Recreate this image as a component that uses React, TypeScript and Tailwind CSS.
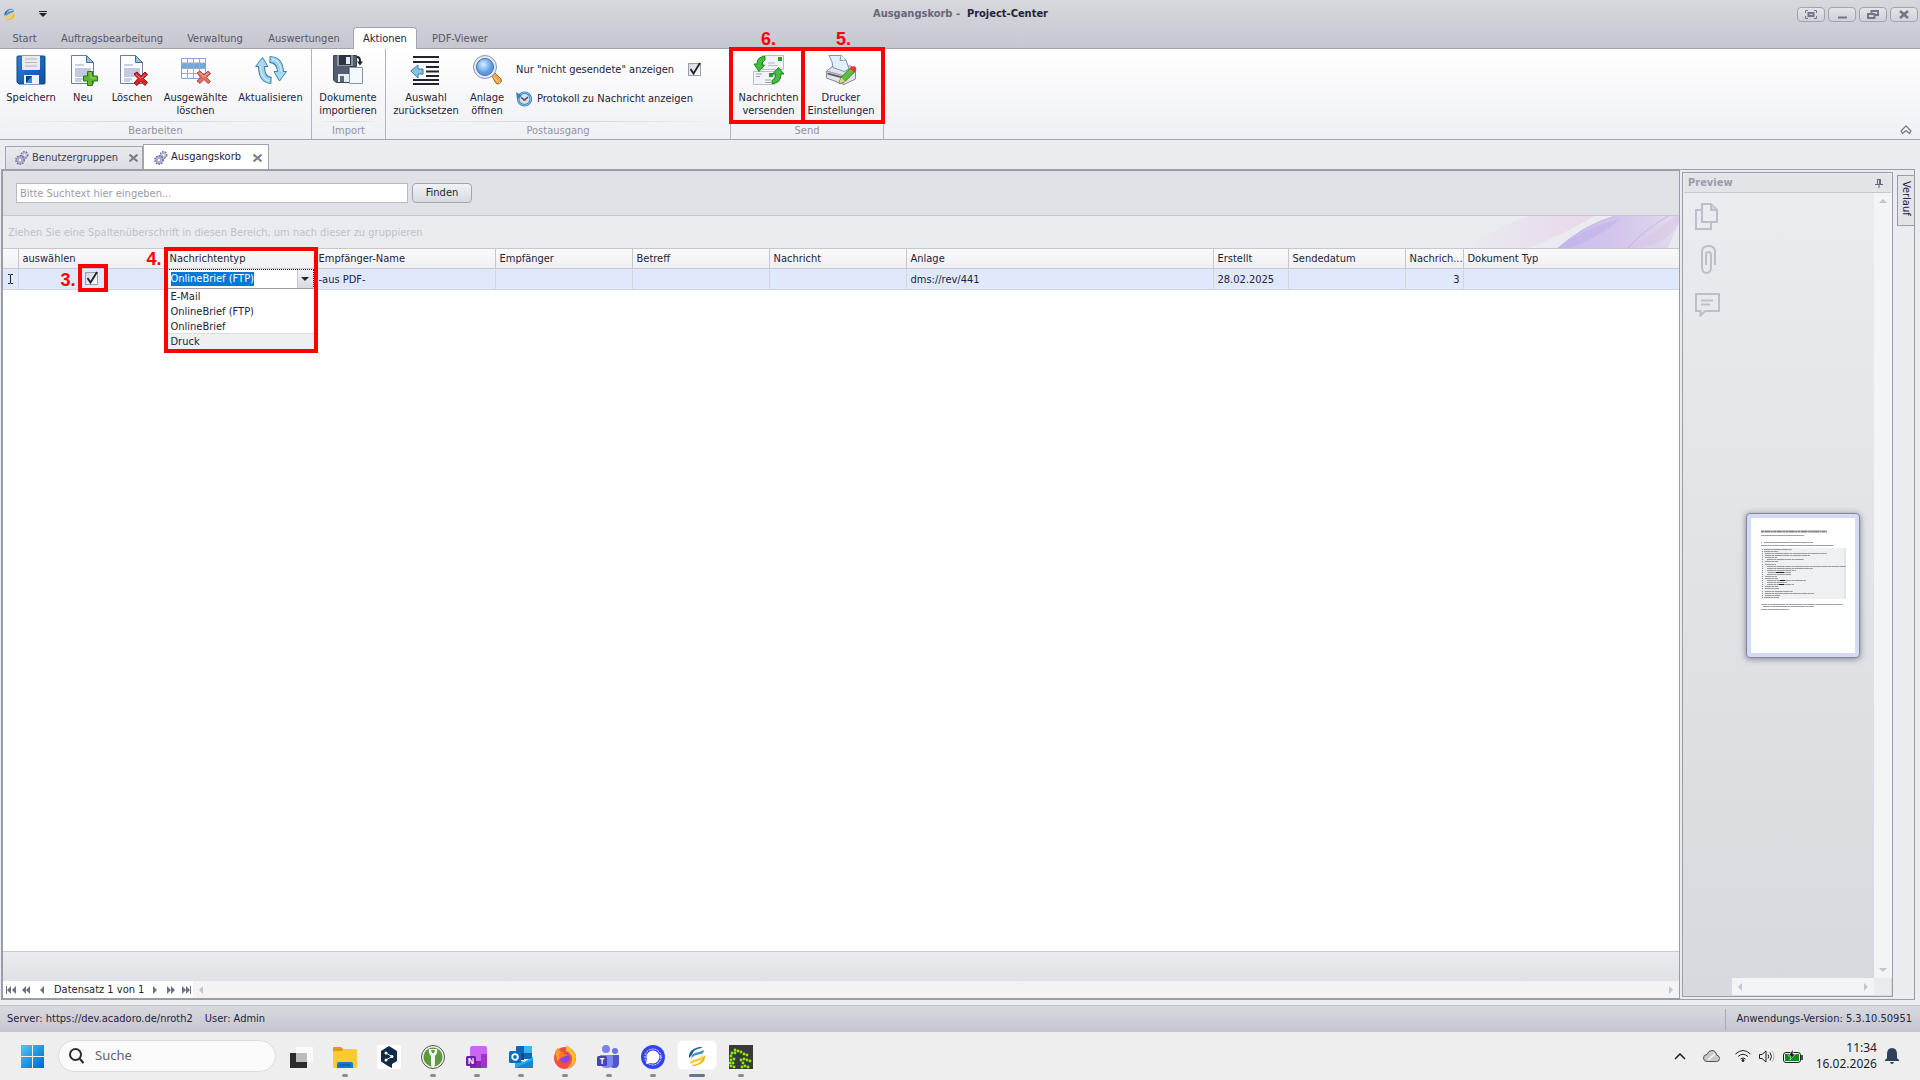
import { useState, type ReactNode } from 'react';

const ribbonTabs = [
  { label: 'Start', width: 'w-[49px]' },
  { label: 'Auftragsbearbeitung', width: 'w-[126px]' },
  { label: 'Verwaltung', width: 'w-20' },
  { label: 'Auswertungen', width: 'w-[98px]' },
  { label: 'Aktionen', width: 'w-16', active: true },
  { label: 'PDF-Viewer', width: 'w-[86px]' },
];

const columns = [
  { label: '', width: 'w-[15px]' },
  { label: 'auswählen', width: 'w-[147px]' },
  { label: 'Nachrichtentyp', width: 'w-[149px]' },
  { label: 'Empfänger-Name', width: 'w-[181px]' },
  { label: 'Empfänger', width: 'w-[137px]' },
  { label: 'Betreff', width: 'w-[137px]' },
  { label: 'Nachricht', width: 'w-[137px]' },
  { label: 'Anlage', width: 'w-[307px]' },
  { label: 'Erstellt', width: 'w-[75px]' },
  { label: 'Sendedatum', width: 'w-[117px]' },
  { label: 'Nachrichtennummer', short: 'Nachrich...', width: 'w-[58px]' },
  { label: 'Dokument Typ', width: 'w-auto' },
];

const messageTypes = ['E-Mail', 'OnlineBrief (FTP)', 'OnlineBrief', 'Druck'];

/* ---------- Ribbon icons ---------- */

function SaveIcon() {
  return (
    <svg width="32" height="32" viewBox="0 0 32 32">
      <defs>
        <linearGradient id="disk" x1="0" y1="0" x2="1" y2="1">
          <stop offset="0" stopColor="#2f7fd0" />
          <stop offset="1" stopColor="#0b4fa5" />
        </linearGradient>
      </defs>
      <path d="M2 3q0-1 1-1h26q1 0 1 1v26q0 1-1 1H4l-2-2z" fill="url(#disk)" stroke="#0d428c" />
      <path d="M7 2h18v13q0 1-1 1H8q-1 0-1-1z" fill="#e9eaec" />
      <path d="M10 5h12M10 8.500h12M10 12h12" stroke="#b5b7bb" />
      <path d="M9 21h15v9H9z" fill="#f1f3f6" />
      <path d="M11 22h6v7h-6z" fill="#0b3f86" />
      <path d="M17 22l-6 7h6z" fill="#3d8ad8" />
    </svg>
  );
}

function Sheet() {
  return (
    <>
      <path d="M4.500 1.500h15l7 7v21h-22z" fill="#fbfcff" stroke="#6d7c97" />
      <path d="M19.500 1.500v7h7z" fill="#8fc4e6" stroke="#4d6b92" />
      <path d="M8 11h9M8 25h8M8 27h6" stroke="#c9cfe2" strokeWidth="2" />
      <path d="M8 14h16v9H8z" fill="#c3c9e2" />
    </>
  );
}

function NewIcon() {
  return (
    <svg width="32" height="32" viewBox="0 0 32 32">
      <Sheet />
      <path d="M20.500 17.500h5v4.500h5v5h-5v4.500h-5V27h-4v-5h4z" fill="#5cb82c" stroke="#2a7a10" />
      <path d="M22 19h2v5h5" fill="none" stroke="#93dc62" />
    </svg>
  );
}

function DeleteIcon() {
  return (
    <svg width="32" height="32" viewBox="0 0 32 32">
      <Sheet />
      <path d="M18 20l3-2 4 4 4-4 2.500 2.500-4 4 4 4L29 31.500l-4-4-4 4L18 29l4-4.500z" fill="#d8262a" stroke="#8d1013" />
      <path d="M20 20.500l5 4 4-4" fill="none" stroke="#f58282" />
    </svg>
  );
}

function DeleteRowsIcon() {
  return (
    <svg width="32" height="32" viewBox="0 0 32 32">
      <path d="M1.500 4.500h24v20h-24z" fill="#fafbff" stroke="#8f9fcb" />
      <path d="M2 9h23v5.500H2z" fill="#6ea9d8" />
      <path d="M2 9h23M2 14.500h23M2 19.500h23M7.500 5v19M13.500 5v19M19.500 5v19" stroke="#9aa9d2" />
      <path d="M17 19l3-2 4 4 4-4 2.500 2.500-4 4 4 4L28 29.500l-4-4-4 4L17 27l4-3.500z" fill="#e0705f" stroke="#b54a40" />
      <path d="M19.500 19l4.500 4 4-4" fill="none" stroke="#f6b3a6" />
    </svg>
  );
}

function RefreshIcon() {
  return (
    <svg width="32" height="32" viewBox="0 0 32 32" fill="none">
      <path d="M16.500 26.500Q6.500 26 6.500 12M14.500 5.500Q25.500 6 25.500 19" stroke="#3f7fb0" strokeWidth="7" />
      <path d="M.5 12.500L7.500 3.500 13 12.500zM31.500 17.500L24.500 27 19 17.500z" fill="#a9d8f2" stroke="#3f7fb0" strokeLinejoin="round" />
      <path d="M15.500 26.400Q6.500 26 6.500 11.500M15.500 5.600Q25.500 6 25.500 19" stroke="#9fd2ee" strokeWidth="5" />
      <path d="M14 27Q6 25 5.500 12M17 5Q26 7 26.500 18" stroke="#dff3fd" />
    </svg>
  );
}

function ImportIcon() {
  return (
    <svg width="32" height="32" viewBox="0 0 32 32">
      <path d="M1.500 1.500h23v11H17v16H4l-2.500-2.500z" fill="#545d6d" stroke="#3c4453" />
      <path d="M5 1h16v11H5z" fill="#8d95a3" />
      <path d="M7 1h12v10H7z" fill="#2b3240" />
      <path d="M14 3h4v7h-4z" fill="#e9eef5" />
      <path d="M6 20h11v8H6z" fill="#e8ebf1" />
      <path d="M8 22h4v6H8z" fill="#5c6575" />
      <path d="M17.500 13.500h13v16h-13z" fill="#f4f9fe" stroke="#7f95b2" />
      <path d="M25 3q3 0 3 4v1" fill="none" stroke="#20242e" strokeWidth="2" />
      <path d="M25 7.500h6l-3 4z" fill="#20242e" />
    </svg>
  );
}

function ResetSelectionIcon() {
  return (
    <svg width="32" height="32" viewBox="0 0 32 32">
      <path d="M3 3h26M3 8h26M16 13h13M16 17.500h13M16 22h13M3 26h26M3 30h26" stroke="#20242e" strokeWidth="2" />
      <path d="M.8 17L8 11v4h5v5H8v4z" fill="#85c4e3" stroke="#3b7ba6" strokeLinejoin="round" />
    </svg>
  );
}

function MagnifierIcon() {
  return (
    <svg width="32" height="32" viewBox="0 0 32 32">
      <defs>
        <radialGradient id="lens" cx=".4" cy=".35">
          <stop offset="0" stopColor="#d5edff" />
          <stop offset="1" stopColor="#5a9be2" />
        </radialGradient>
      </defs>
      <path d="M21 22l3-3 6 6q1.500 3-1.500 4.500t-4-1z" fill="#efa544" stroke="#a3652a" />
      <path d="M22 23l7 6" stroke="#f9d79a" />
      <circle cx="14" cy="13" r="11.500" fill="#e7eaf2" stroke="#8a95ad" />
      <circle cx="14" cy="13" r="8.500" fill="url(#lens)" stroke="#3d6cba" />
    </svg>
  );
}

function HistoryIcon() {
  return (
    <svg width="16" height="16" viewBox="0 0 16 16" className="shrink-0">
      <circle cx="8.500" cy="8" r="6.300" fill="#cfe6f7" stroke="#3f7db6" strokeWidth="2.600" />
      <circle cx="8.500" cy="8" r="6.300" fill="none" stroke="#8fc3e8" />
      <path d="M0 1l1 7 5-3z" fill="#3f7db6" />
      <path d="M5 6.500l3.500 2.500L12 6" fill="none" stroke="#33475d" strokeWidth="1.500" />
      <circle cx="8.500" cy="9" r="1.200" fill="#d3422f" />
    </svg>
  );
}

function SendMailIcon() {
  return (
    <svg width="32" height="32" viewBox="0 0 32 32">
      <path d="M9.500 1.500h21v14h-21z" fill="#f2f3f8" stroke="#b9bccb" />
      <path d="M25 3h4v4h-4z" fill="#23a127" />
      <path d="M15 9h7M15 11.500h10" stroke="#b6b9c6" />
      <path d="M.5 17.500h21v13H.5z" fill="#f2f3f8" stroke="#b9bccb" />
      <path d="M16 19h4v4h-4z" fill="#23a127" />
      <path d="M3 20h6M3 22.500h4M12 26h6M12 28.500h6" stroke="#9da0b0" />
      <g fill="#43bf3d" stroke="#17801a" strokeLinejoin="round">
        <path d="M12 2.500Q4 2.500 4 10H1l5 7.500L11.500 11H9q0-4 3-5z" />
        <path d="M19 29.500q9 0 9-9.500h3l-5.500-6.500-6 6.500H23q0 5-4 6.500z" />
      </g>
    </svg>
  );
}

function PrinterIcon() {
  return (
    <svg width="32" height="32" viewBox="0 0 32 32">
      <path d="M1.500 17L8 12h18l4.500 5v8L19 30.500 1.500 24z" fill="#e3e4e8" stroke="#878b94" strokeLinejoin="round" />
      <path d="M1.500 17L18 21.500 30.500 17M18 21.500v9" fill="none" stroke="#9599a3" />
      <path d="M2.500 18.500l15 4v2l-15-4z" fill="#5d606a" />
      <path d="M4 1.500h12l5 4.500 3 9-5 2.500-11-4Q8 8 4 1.500z" fill="#e2f0fb" stroke="#7893b8" strokeLinejoin="round" />
      <path d="M16 1.500l-1 5 6-.5" fill="#fff" stroke="#7893b8" />
      <path d="M14 29.500l2-6 10-10 4 4-10 10z" fill="#5fc03c" stroke="#2d7f1b" strokeLinejoin="round" />
      <path d="M14 29.500l2-6 4 4z" fill="#f1cd9a" />
      <path d="M25 14.500l2-2q3-1 4 1t-.5 3.500L29 18.500z" fill="#dd3b33" />
    </svg>
  );
}

function GearsIcon() {
  return (
    <svg width="14" height="14" viewBox="0 0 14 14" className="shrink-0">
      <circle cx="9.500" cy="4" r="3" fill="#b9bbdb" stroke="#6b6d93" strokeWidth="2" strokeDasharray="1.500 1" />
      <circle cx="9.500" cy="4" r="2.800" fill="#b9bbdb" />
      <circle cx="5" cy="9" r="3.900" fill="#b9bbdb" stroke="#6b6d93" strokeWidth="2" strokeDasharray="1.500 1" />
      <circle cx="5" cy="9" r="3.500" fill="#a9abd0" />
      <circle cx="5" cy="9" r="1.200" fill="#fff" />
      <circle cx="9.500" cy="4" r="1" fill="#fff" />
    </svg>
  );
}

function AppLogo({ size }: { size: number }) {
  return (
    <svg width={size} height={size} viewBox="0 0 20 20">
      <path d="M2 12Q1 3 13 1q3 0 2 1Q6 3 5 9z" fill="#1f5f98" />
      <path d="M4 13Q4 6 12 5l5-2q0 4-5 4.500Q6 9 4 13z" fill="#3d94c6" />
      <path d="M18 8q1 9-11 11-3 0-2-1 9-1 10-7z" fill="#edb90e" />
      <path d="M16 7q0 7-8 8l-5 2q0-4 5-4.500 6-1.500 8-5.500z" fill="#f6d33b" />
    </svg>
  );
}

/* ---------- Small building blocks ---------- */

function CheckBox({ label }: { label: string }) {
  const [checked, setChecked] = useState(true);
  return (
    <span className="relative inline-block size-[13px] shrink-0">
      <input
        id={label}
        type="checkbox"
        aria-label={label}
        checked={checked}
        onChange={() => setChecked(!checked)}
        className="block size-[13px] appearance-none border border-[#9c9daa] bg-linear-to-br from-[#d4d5dc] to-white"
      />
      {checked && (
        <svg width="13" height="13" viewBox="0 0 13 13" className="pointer-events-none absolute inset-0 overflow-visible">
          <path d="M2.500 6L5.500 10.500 12 0" fill="none" stroke="#20202c" strokeWidth="1.800" />
        </svg>
      )}
    </span>
  );
}

function RibbonButton({ icon, width, children }: { icon: ReactNode; width: string; children: ReactNode }) {
  return (
    <button className={`flex h-[72px] flex-col items-center gap-[5px] pt-[5px] leading-[13px] whitespace-nowrap ${width}`}>
      {icon}
      <span>{children}</span>
    </button>
  );
}

function RibbonGroup({ title, width, children }: { title: string; width: string; children: ReactNode }) {
  return (
    <section className={`flex flex-col border-r border-[#b3b4c0] ${width}`}>
      <div className="flex flex-1 pl-0.5">{children}</div>
      <div className="mx-2 h-px bg-linear-to-r from-transparent via-[#d0d1d9] to-transparent" />
      <h2 className="h-[17px] text-center leading-[17px] text-[#9293a0]">{title}</h2>
    </section>
  );
}

function Arrow({ dir, className = '' }: { dir: 'left' | 'right' | 'up' | 'down'; className?: string }) {
  const paths = {
    left: 'M6 0v8L2 4z',
    right: 'M2 0v8l4-4z',
    up: 'M0 6h8L4 2z',
    down: 'M0 2h8L4 6z',
  };
  return (
    <svg width="8" height="8" viewBox="0 0 8 8" fill="currentColor" className={className}>
      <path d={paths[dir]} />
    </svg>
  );
}

function WindowButton({ label, children }: { label: string; children: ReactNode }) {
  return (
    <button
      aria-label={label}
      className="flex h-[15px] w-7 items-center justify-center rounded-sm border border-[#a2a3ae] bg-linear-to-b from-[#e4e5e9] to-[#cfd0d8]"
    >
      <svg width="12" height="9" viewBox="0 0 12 9" fill="none" stroke="#74758a" strokeWidth="2">
        {children}
      </svg>
    </button>
  );
}

/* ---------- Window parts ---------- */

function TitleBar() {
  return (
    <header className="border-b border-[#a3a4b2] bg-linear-to-b from-[#d7d8dd] to-[#c6c6d0]">
      <div className="flex h-[27px] items-center pt-px">
        <div className="flex flex-1 items-center gap-[23px] pl-[3px]">
          <AppLogo size={13} />
          <button aria-label="Schnellzugriff anpassen">
            <svg width="8" height="6" viewBox="0 0 8 6" fill="#20202c">
              <path d="M0 0h8v1H0zM0 2h8L4 6z" />
            </svg>
          </button>
        </div>
        <h1 className="font-bold whitespace-pre">
          <span className="text-[#666778]">Ausgangskorb -</span>  Project-Center
        </h1>
        <div className="flex flex-1 justify-end gap-[3px] pr-0.5">
          <WindowButton label="Vollbild">
            <path d="M3.500 3h5v3h-5z" />
            <path d="M.5 3V.5H3M9 .5h2.500V3M.5 6v2.500H3M9 8.500h2.500V6" strokeWidth="1" />
          </WindowButton>
          <WindowButton label="Minimieren">
            <path d="M2 7.500h9" />
          </WindowButton>
          <WindowButton label="Wiederherstellen">
            <path d="M4.500 3V1H11v4H8M1 4h6.500v4H1z" />
          </WindowButton>
          <WindowButton label="Schließen">
            <path d="M2 1l8 7M10 1L2 8" strokeWidth="2.500" />
          </WindowButton>
        </div>
      </div>
      <nav className="flex h-[21px] items-stretch">
        {ribbonTabs.map((tab) => (
          <button
            key={tab.label}
            className={`whitespace-nowrap ${tab.width} ${
              tab.active
                ? '-mb-px rounded-t-sm border border-b-0 border-[#a3a4b2] bg-white pt-0.5'
                : 'pt-1 text-[#565768]'
            }`}
          >
            {tab.label}
          </button>
        ))}
      </nav>
    </header>
  );
}

function Ribbon() {
  return (
    <div className="flex h-[91px] border-b border-[#a3a4b2] bg-linear-to-b from-white to-[#eff0f4]">
      <RibbonGroup title="Bearbeiten" width="w-[312px]">
        <RibbonButton icon={<SaveIcon />} width="w-[58px]">Speichern</RibbonButton>
        <RibbonButton icon={<NewIcon />} width="w-[46px]">Neu</RibbonButton>
        <RibbonButton icon={<DeleteIcon />} width="w-[52px]">Löschen</RibbonButton>
        <RibbonButton icon={<DeleteRowsIcon />} width="w-[75px]">Ausgewählte<br />löschen</RibbonButton>
        <RibbonButton icon={<RefreshIcon />} width="w-[75px]">Aktualisieren</RibbonButton>
      </RibbonGroup>
      <RibbonGroup title="Import" width="w-[74px]">
        <RibbonButton icon={<ImportIcon />} width="w-[68px]">Dokumente<br />importieren</RibbonButton>
      </RibbonGroup>
      <RibbonGroup title="Postausgang" width="w-[345px]">
        <RibbonButton icon={<ResetSelectionIcon />} width="w-[76px]">Auswahl<br />zurücksetzen</RibbonButton>
        <RibbonButton icon={<MagnifierIcon />} width="w-[46px]">Anlage<br />öffnen</RibbonButton>
        <div className="flex flex-col gap-[15px] pt-3.5 pl-1.5">
          <div className="flex h-[13px] w-[185px] items-center justify-between whitespace-nowrap">
            <label htmlFor={'Nur "nicht gesendete" anzeigen'} className="pt-px">Nur "nicht gesendete" anzeigen</label>
            <CheckBox label={'Nur "nicht gesendete" anzeigen'} />
          </div>
          <button className="flex h-4 items-center gap-[5px] whitespace-nowrap">
            <HistoryIcon />
            Protokoll zu Nachricht anzeigen
          </button>
        </div>
      </RibbonGroup>
      <RibbonGroup title="Send" width="w-[153px]">
        <div className="relative">
          <RibbonButton icon={<SendMailIcon />} width="w-[71px]">Nachrichten<br />versenden</RibbonButton>
          <Marker label="6." box="-left-1 -top-0.5 h-[77px] w-[76px]" text="left-7 -top-5" />
        </div>
        <div className="relative">
          <RibbonButton icon={<PrinterIcon />} width="w-[74px]">Drucker<br />Einstellungen</RibbonButton>
          <Marker label="5." box="-left-[3px] -top-0.5 h-[77px] w-[84px]" text="left-8 -top-5" />
        </div>
      </RibbonGroup>
      <div className="flex flex-1 items-end justify-end pr-2 pb-1">
        <button aria-label="Menüband minimieren">
          <svg width="12" height="10" viewBox="0 0 12 10" fill="#fff" stroke="#777889" strokeWidth="1.300" strokeLinejoin="round">
            <path d="M6 1l5 5-1.500 2.500L6 5.500 2.500 8.500 1 6z" />
          </svg>
        </button>
      </div>
    </div>
  );
}

/* Numbered red frame that lies over the control it explains */
function Marker({ label, box, text }: { label: string; box: string; text: string }) {
  return (
    <>
      <div className={`pointer-events-none absolute z-20 border-4 border-[#ff0000] ${box}`} />
      <span className={`pointer-events-none absolute z-20 font-['Liberation_Sans',Arial,sans-serif] text-lg leading-5 font-bold text-[#ff0000] ${text}`}>
        {label}
      </span>
    </>
  );
}

function DocumentTabs() {
  return (
    <div className="flex h-[29px] items-end pl-[5px]">
      <div className="flex h-[23px] w-[138px] items-center gap-[3px] border border-b-0 border-[#a3a4b2] bg-linear-to-b from-[#e9eaee] to-[#dcdde2] pr-1 pl-[9px]">
        <GearsIcon />
        <button className="flex-1 text-left text-[#3c3d50]">Benutzergruppen</button>
        <CloseTab label="Benutzergruppen schließen" />
      </div>
      <div className="-mb-px flex h-[26px] w-[126px] items-center gap-[3px] border border-b-0 border-[#a3a4b2] bg-white pr-1.5 pl-2.5">
        <GearsIcon />
        <button className="flex-1 text-left">Ausgangskorb</button>
        <CloseTab label="Ausgangskorb schließen" />
      </div>
    </div>
  );
}

function CloseTab({ label }: { label: string }) {
  return (
    <button aria-label={label}>
      <svg width="9" height="8" viewBox="0 0 9 8" stroke="#7b7c8b" strokeWidth="2">
        <path d="M.5.500l8 7M8.500.5l-8 7" />
      </svg>
    </button>
  );
}

function GroupPanel() {
  return (
    <div className="flex h-[33px] items-center justify-between border-b border-[#c6c7d1] bg-[#eaebef] pl-[5px] text-[#bfc0ca]">
      <p className="pt-[3px]">Ziehen Sie eine Spaltenüberschrift in diesen Bereich, um nach dieser zu gruppieren</p>
      <svg width="240" height="32" viewBox="0 0 240 32">
        <defs>
          <linearGradient id="pink" x1="0" x2="1">
            <stop offset="0" stopColor="#eaebef" />
            <stop offset="1" stopColor="#e8cfe9" />
          </linearGradient>
          <linearGradient id="violet" x1="0" x2="1">
            <stop offset="0" stopColor="#c9bdf0" />
            <stop offset=".5" stopColor="#d3c5ea" />
            <stop offset="1" stopColor="#e2dbef" />
          </linearGradient>
        </defs>
        <path d="M20 32Q70 6 90 0h65Q130 16 90 32z" fill="url(#pink)" opacity=".7" />
        <path d="M119 32Q145 9 176 0h64v6l-11 26z" fill="url(#violet)" />
        <path d="M119 32q30-22 62-29-20 18-50 29z" fill="#b9a9ec" opacity=".4" />
        <path d="M189 32Q220 14 236 0h4v8q-14 20-40 24z" fill="#d9c3e4" opacity=".5" />
        <path d="M119 32Q145 9 176 0M189 32Q205 14 229 0" fill="none" stroke="#b9a0e0" opacity=".6" />
      </svg>
    </div>
  );
}

function TypeEditor() {
  const [value, setValue] = useState('OnlineBrief (FTP)');
  return (
    <div className="relative flex h-5 w-full items-center justify-between border border-dotted border-[#20202c] bg-white pl-1">
      <select
        aria-label="Nachrichtentyp"
        value={value}
        onChange={(e) => setValue(e.target.value)}
        className="field-sizing-content h-[14px] appearance-none bg-[#0078d7] leading-[14px] text-white"
      >
        {messageTypes.map((type) => (
          <option key={type}>{type}</option>
        ))}
      </select>
      <button aria-label="Liste öffnen" className="flex h-full w-4 items-center justify-center border-l border-[#c6c7d1] bg-linear-to-b from-[#f1f1f5] to-[#d9dae0]">
        <Arrow dir="down" />
      </button>
      <ul className="absolute top-[18px] -left-px z-10 w-[148px] border-t border-[#9b9ca9] bg-white">
        {messageTypes.map((type) => (
          <li
            key={type}
            className={`h-[15px] pl-[5px] leading-[15px] ${type === 'Druck' ? 'bg-[#eeeff1] outline outline-[#dcdde2]' : ''}`}
          >
            {type}
          </li>
        ))}
      </ul>
      <Marker label="4." box="-left-[3px] -top-[23px] h-[106px] w-[154px]" text="-left-5 -top-[21px]" />
    </div>
  );
}

function OutboxTable() {
  return (
    <table className="w-full table-fixed border-collapse">
      <thead>
        <tr className="h-[19px] bg-linear-to-b from-[#fafafb] to-[#f0f0f3] leading-4">
          {columns.map((col, i) => (
            <th
              key={i}
              title={col.label}
              className={`border-b border-[#c6c7d1] px-1 pt-0.5 text-left font-normal whitespace-nowrap not-last:border-r ${col.width}`}
            >
              {col.short ?? col.label}
            </th>
          ))}
        </tr>
      </thead>
      <tbody>
        <tr className="h-[21px] bg-[#e0e9fc] leading-4 *:border-b *:border-[#d4d5dd] *:p-0 *:not-last:border-r">
          <td>
            <svg width="15" height="10" viewBox="0 0 15 10" fill="none" stroke="#20202c">
              <path d="M5 .5h2l.5 1 .5-1h2M7.500 1v8M5 9.500h2l.5-1 .5 1h2" />
            </svg>
          </td>
          <td>
            <div className="relative flex justify-center">
              <CheckBox label="auswählen" />
              <Marker label="3." box="left-[59px] -top-2 h-7 w-[30px]" text="left-[42px] -top-0.5" />
            </div>
          </td>
          <td>
            <TypeEditor />
          </td>
          <td><span className="block pt-[3px] pl-1">-aus PDF-</span></td>
          <td />
          <td />
          <td />
          <td><span className="block pt-[3px] pl-1">dms://rev/441</span></td>
          <td><span className="block pt-[3px] pl-1">28.02.2025</span></td>
          <td />
          <td className="text-right"><span className="block pt-[3px] pr-[3px]">3</span></td>
          <td />
        </tr>
      </tbody>
    </table>
  );
}

function Navigator() {
  return (
    <footer className="flex h-[17px] items-stretch bg-[#f3f3f6]">
      <div className="flex w-[190px] items-center bg-white pl-[3px] text-[#6f7080]">
        <button aria-label="Erster" className="flex w-4">
          <svg width="10" height="8" viewBox="0 0 10 8" fill="currentColor">
            <path d="M0 0h1v8H0zM5 0v8L1 4zM10 0v8L6 4z" />
          </svg>
        </button>
        <button aria-label="Seite zurück" className="flex w-4">
          <svg width="9" height="8" viewBox="0 0 9 8" fill="currentColor">
            <path d="M4 0v8L0 4zM8 0v8L4 4z" />
          </svg>
        </button>
        <button aria-label="Zurück" className="flex w-4"><Arrow dir="left" /></button>
        <span className="w-[97px] pt-0.5 whitespace-nowrap text-[#23233a]">Datensatz 1 von 1</span>
        <button aria-label="Weiter" className="flex w-4"><Arrow dir="right" /></button>
        <button aria-label="Seite vor" className="flex w-[15px]">
          <svg width="9" height="8" viewBox="0 0 9 8" fill="currentColor">
            <path d="M0 0v8l4-4zM4 0v8l4-4z" />
          </svg>
        </button>
        <button aria-label="Letzter" className="flex">
          <svg width="10" height="8" viewBox="0 0 10 8" fill="currentColor">
            <path d="M0 0v8l4-4zM4 0v8l4-4zM8 0h1v8H8z" />
          </svg>
        </button>
      </div>
      <div className="flex flex-1 items-center justify-between px-1 text-[#c3c4cc]">
        <Arrow dir="left" />
        <Arrow dir="right" />
      </div>
    </footer>
  );
}

function Outbox() {
  return (
    <main className="flex min-w-0 flex-1 flex-col border-2 border-r border-[#9b9ca9] bg-white">
      <form className="flex h-[45px] items-center gap-1 border-b border-[#c6c7d1] bg-[#e0e1e6] pl-[13px]" onSubmit={(e) => e.preventDefault()}>
        <input
          type="text"
          aria-label="Suchtext"
          placeholder="Bitte Suchtext hier eingeben..."
          className="h-5 w-[392px] border border-[#b9bac5] bg-white px-[3px] placeholder:text-[#9a9ba8]"
        />
        <button className="h-5 w-[60px] rounded-sm border border-[#a3a4b2] bg-linear-to-b from-[#f1f2f4] to-[#d9dae0] pt-px">Finden</button>
      </form>
      <GroupPanel />
      <div className="flex-1">
        <OutboxTable />
      </div>
      <div className="h-[30px] border-t border-[#c6c7d1] bg-linear-to-b from-[#eaebef] to-[#e0e1e6]" />
      <Navigator />
    </main>
  );
}

/* Text rows of the page preview: y, indent, width */
const previewRows = [
  [24, 10, 1], [24, 13, 49], [27, 10, 73],
  [31, 13, 28], [33, 13, 14], [35, 14, 62], [37, 14, 45], [39, 14, 12], [41, 16, 37], [43, 14, 13],
  [46, 14, 11], [48, 16, 79], [50, 16, 46], [52, 16, 29], [54, 17, 23], [56, 16, 24], [58, 14, 12],
  [60, 14, 13], [62, 16, 39], [64, 16, 20], [66, 16, 27], [68, 14, 13], [70, 14, 14],
  [73, 14, 28], [75, 14, 49], [77, 14, 15], [79, 13, 15],
  [86, 10, 82], [88, 12, 51], [91, 10, 28],
];

function PagePreview() {
  return (
    <div className="rounded-sm border border-[#868896] bg-[#d3dbf6] p-1 shadow-[0_1px_6px_rgba(60,60,80,0.6)]">
      <svg width="104" height="135" viewBox="0 0 104 135" className="block bg-white">
        <path d="M10 30h85v51H10z" fill="#eff0f1" />
        <path d="M93 30h2v51h-2z" fill="#e3e4e6" />
        <path d="M10 13.500h66" stroke="#4c4d54" strokeWidth="2" strokeDasharray="3 .4 6 .4 2 .4" opacity=".7" />
        <path d="M10 17.500h43" stroke="#a2a3aa" />
        {previewRows.map(([y, x, w], i) => (
          <g key={i} stroke="#85878e" opacity=".8">
            <path d={`M${x} ${y + 0.5}h${w}`} strokeDasharray="6 .4 3 .4 8 .4" />
            {y > 30 && y < 81 && <path d={`M11 ${y + 0.5}h1`} stroke="#70809c" />}
          </g>
        ))}
        <path d="M25 54.500h8M29 62.500h5M28 66.500h5" stroke="#1c1c22" />
      </svg>
    </div>
  );
}

function PreviewPanel() {
  return (
    <aside className="flex border border-l-0 border-[#9b9ca9]">
      <div className="mt-0.5 mb-0.5 ml-0.5 flex w-[211px] flex-col border border-[#9b9ca9] bg-linear-to-b from-[#ebecf0] to-[#d8d9de] p-px">
        <div className="flex h-[19px] items-center justify-between border-b border-[#c6c7d1] bg-[#e3e4e8] pt-px pr-2 pl-1">
          <h2 className="font-bold text-[#9b9ca9]">Preview</h2>
          <button aria-label="Automatisch ausblenden">
            <svg width="8" height="9" viewBox="0 0 8 9" fill="none" stroke="#666778">
              <path d="M2.500 0v5M5.500 0v5M2 .5h4M0 5.500h8M4 6v3" />
              <path d="M5 0v5" strokeWidth="2" />
            </svg>
          </button>
        </div>
        <div className="flex flex-1">
          <div className="flex w-12 flex-col items-start gap-[15px] pt-2.5 pl-[11px]">
            <button aria-label="Seiten">
              <svg width="23" height="27" viewBox="0 0 23 27" fill="none" stroke="#bdbeca" strokeWidth="2">
                <path d="M7 1h9l6 6v12H7zM7 7H1v19h15v-7" />
                <path d="M16 1v6h6" fill="#d2d3db" />
              </svg>
            </button>
            <button aria-label="Anhänge" className="pl-1.5">
              <svg width="15" height="29" viewBox="0 0 15 29" fill="none" stroke="#bdbeca" strokeWidth="2">
                <path d="M14 20V7q0-6-6.500-6T1 7v15q0 6 4.500 6T10 22V10q0-3-2.500-3T5 10v10" />
              </svg>
            </button>
            <button aria-label="Kommentare" className="pt-1">
              <svg width="25" height="24" viewBox="0 0 25 24" fill="none" stroke="#bdbeca" strokeWidth="2">
                <path d="M1 1h23v17H10l-4.500 4.500V18H1zM6 7.500h12M6 11.500h9" />
              </svg>
            </button>
          </div>
          <div className="flex flex-1 flex-col">
            <div className="flex flex-1 items-center justify-center">
              <PagePreview />
            </div>
            <div className="flex h-[17px] items-center justify-between bg-[#f3f4f6] px-1 text-[#c3c4cc]">
              <Arrow dir="left" />
              <Arrow dir="right" />
            </div>
          </div>
          <div className="flex w-[17px] flex-col items-center text-[#c3c4cc]">
            <div className="flex flex-1 flex-col items-center justify-between bg-[#f3f4f6] px-[5px] py-1">
              <Arrow dir="up" />
              <Arrow dir="down" />
            </div>
            <div className="h-[17px] w-full bg-[#eaebef]" />
          </div>
        </div>
      </div>
      <div className="flex w-[21px] justify-end pt-[5px]">
        <button className="flex h-[51px] w-[17px] items-center justify-center border border-r-0 border-[#9b9ca9] bg-[#e3e4e8] pb-1 [writing-mode:vertical-rl]">
          Verlauf
        </button>
      </div>
    </aside>
  );
}

function StatusBar() {
  return (
    <footer className="flex h-[27px] items-center justify-between border-t border-[#bdbec9] bg-linear-to-b from-[#d9dadf] to-[#c5c5cf] pt-px pr-2 pl-[7px]">
      <div className="flex gap-3">
        <span>Server: https://dev.acadoro.de/nroth2</span>
        <span>User: Admin</span>
      </div>
      <span className="border-l border-[#a9aab6] py-0.5 pl-2.5">Anwendungs-Version: 5.3.10.50951</span>
    </footer>
  );
}

/* ---------- Taskbar ---------- */

const greenshotDots = [
  [6, 5], [9, 6], [12, 7], [15, 9], [18, 10], [3, 8], [2, 11], [6, 8], [2, 15], [5, 14], [1, 18],
  [4, 18], [2, 21], [5, 22], [12, 15], [15, 14], [18, 15], [21, 16], [14, 18], [16, 21], [19, 22], [13, 22],
];

const taskIcons = [
  {
    name: 'Aktive Anwendungen',
    running: false,
    art: (
      <>
        <path d="M1 8h17v15H1z" fill="#2b2b2b" />
        <path d="M7 2h17v15H7z" fill="#fff" opacity=".75" />
        <path d="M7 8h11v9H7z" fill="#bcbcbc" />
      </>
    ),
  },
  {
    name: 'Explorer',
    running: true,
    art: (
      <>
        <path d="M0 3q0-1 1-1h7l3 3-2 3H0z" fill="#dd9a04" />
        <path d="M0 6h9l2-2h12q1 0 1 1v17q0 1-1 1H1q-1 0-1-1z" fill="#fdc935" />
        <path d="M4 23v-4q0-2 2-2h12q2 0 2 2v4z" fill="#1279cd" />
        <path d="M7 20h10" stroke="#0a4f91" />
      </>
    ),
  },
  {
    name: 'DeepL',
    running: false,
    art: (
      <>
        <rect width="24" height="24" rx="2" fill="#fff" />
        <path d="M12 1l8 5v10l-5 3v4l-4-2-7-4.500V6z" fill="#0f2b46" />
        <path d="M9 8l6 3.500L9 15" fill="none" stroke="#fff" />
        <circle cx="9" cy="8" r="1.500" fill="#fff" />
        <circle cx="15" cy="11.500" r="1.500" fill="#fff" />
        <circle cx="9" cy="15" r="1.500" fill="#fff" />
      </>
    ),
  },
  {
    name: 'KeePassXC',
    running: true,
    art: (
      <>
        <circle cx="12" cy="12" r="11.500" fill="#eee" stroke="#555" />
        <circle cx="12" cy="12" r="9.500" fill="#5c9b38" />
        <path d="M8 4h8q1 4-2 7v9l-2 3-2-3v-9Q7 8 8 4z" fill="#f2f2f2" />
        <path d="M10 5h4l-1 3h-2z" fill="#5c9b38" />
      </>
    ),
  },
  {
    name: 'OneNote',
    running: true,
    art: (
      <>
        <path d="M5 3q0-2 2-2h13q2 0 2 2v18q0 2-2 2H5z" fill="#c967f2" />
        <path d="M16 9h6v13q0 1-1 1h-5z" fill="#a234c9" />
        <path d="M5 16h11v7H5z" fill="#8b25b8" />
        <rect x="1" y="11" width="10" height="10" rx="1.500" fill="#7719aa" />
        <text x="6" y="19" fontSize="8" fontWeight="bold" textAnchor="middle" fill="#fff">N</text>
      </>
    ),
  },
  {
    name: 'Outlook',
    running: true,
    art: (
      <>
        <path d="M7 2q0-1 1-1h14q1 0 1 1v12H7z" fill="#1066b5" />
        <path d="M15 1h8v7h-8z" fill="#35b8f1" />
        <path d="M7 8h8v7H7z" fill="#0a4a8d" />
        <path d="M6 23V13l9 4 9-5v10q0 1-1 1z" fill="#28a8ea" />
        <path d="M6 23l18-8v7q0 1-1 1z" fill="#1484d7" />
        <rect y="6" width="12" height="12" rx="1.500" fill="#0f6cbd" />
        <circle cx="6" cy="12" r="2.800" fill="none" stroke="#fff" strokeWidth="1.800" />
      </>
    ),
  },
  {
    name: 'Firefox',
    running: true,
    art: (
      <>
        <circle cx="12" cy="13" r="11" fill="#fb4b45" />
        <path d="M13 0q8 4 10 12-1 10-11 12 8-4 7-12-2-5-6-6z" fill="#ffbd2e" />
        <path d="M2 6l3-3 3 4 4 1 4 3-8 1-4 4z" fill="#ff9a2b" />
        <circle cx="12" cy="13" r="5" fill="#8b46d9" />
        <path d="M6 8l6 1 3 1-5 2-4 2z" fill="#ff7a36" />
      </>
    ),
  },
  {
    name: 'Teams',
    running: true,
    art: (
      <>
        <circle cx="18" cy="6" r="3" fill="#6a72e0" />
        <circle cx="9" cy="4" r="4" fill="#7b83eb" />
        <path d="M13 10h9v8q0 5-5 5-3 0-4-2z" fill="#5157c4" />
        <path d="M3 10h13v8q0 5-6 5-7 0-7-6z" fill="#7f86ee" />
        <rect y="11" width="10" height="10" rx="1.500" fill="#4046b5" />
        <text x="5" y="19" fontSize="8" fontWeight="bold" textAnchor="middle" fill="#fff">T</text>
      </>
    ),
  },
  {
    name: 'Signal',
    running: true,
    art: (
      <>
        <circle cx="12" cy="12" r="12" fill="#3443f0" />
        <circle cx="12" cy="12" r="8" fill="none" stroke="#fff" strokeDasharray="2 1" />
        <path d="M5 19l1-5 4 4z" fill="#fff" />
        <circle cx="12" cy="12" r="6.500" fill="#fff" />
      </>
    ),
  },
  {
    name: 'Project-Center',
    running: true,
    active: true,
    art: (
      <>
        <path d="M0 0h24v24H0z" fill="#fff" />
        <path d="M4 13Q3 4 15 2q3 0 2 1Q8 4 7 10z" fill="#1f5f98" />
        <path d="M6 14Q6 8 14 7l5-2q0 4-5 4.500Q8 10 6 14z" fill="#3d94c6" />
        <path d="M20 10q1 9-11 11-3 0-2-1 9-1 10-7z" fill="#edb90e" />
        <path d="M18 9q0 7-8 8l-5 2q0-4 5-4.500 6-1.500 8-5.500z" fill="#f2cf3a" />
      </>
    ),
  },
  {
    name: 'Greenshot',
    running: true,
    art: (
      <>
        <path d="M0 0h24v24H0z" fill="#393939" />
        {greenshotDots.map(([x, y]) => (
          <circle key={`${x}-${y}`} cx={x} cy={y} r="1.400" fill="#8bf000" />
        ))}
      </>
    ),
  },
];

function Taskbar() {
  return (
    <footer className="flex h-12 items-center bg-[#eeeeee] font-['Noto_Sans',sans-serif] text-xs text-[#1f1f1f]">
      <button aria-label="Start" className="ml-[21px]">
        <svg width="23" height="23" viewBox="0 0 23 23">
          <defs>
            <linearGradient id="win" x1="0" y1="0" x2="1" y2="1">
              <stop offset="0" stopColor="#4ac8f8" />
              <stop offset="1" stopColor="#0067c8" />
            </linearGradient>
          </defs>
          <path d="M0 0h11v11H0zM12 0h11v11H12zM0 12h11v11H0zM12 12h11v11H12z" fill="url(#win)" />
        </svg>
      </button>
      <label className="ml-[14px] flex h-8 w-[218px] items-center gap-[11px] rounded-full border border-[#dcdcdc] bg-[#fafafa] pl-2.5">
        <svg width="15" height="16" viewBox="0 0 15 16" fill="none" stroke="#2d2d2d" strokeWidth="2">
          <circle cx="6.500" cy="6.500" r="5.500" />
          <path d="M10.500 10.500L14.500 15" />
        </svg>
        <input type="text" placeholder="Suche" aria-label="Suche" className="w-40 bg-transparent text-[13px] placeholder:text-[#666666]" />
      </label>
      <div className="ml-[3px] flex">
        {taskIcons.map((item) => (
          <button
            key={item.name}
            aria-label={item.name}
            className={`flex h-12 w-11 flex-col items-center justify-end gap-[5px] ${item.running ? 'pb-[3px]' : 'pb-[11px]'}`}
          >
            <span className={item.active ? 'rounded-sm bg-white px-[7px] pt-1 outline outline-[#f6f6f6]' : ''}>
              <svg width="24" height="24" viewBox="0 0 24 24" className="block">{item.art}</svg>
            </span>
            {item.running && <span className={item.active ? 'h-[3px] w-4 rounded-full bg-[#66758c]' : 'h-[3px] w-1.5 rounded-full bg-[#8a8a8a]'} />}
          </button>
        ))}
      </div>
      <div className="ml-auto flex items-center pr-[21px]">
        <svg width="12" height="7" viewBox="0 0 12 7" fill="none" stroke="#1f1f1f" strokeWidth="1.500">
          <path d="M1 6l5-5 5 5" />
        </svg>
        <svg width="17" height="12" viewBox="0 0 17 12" className="ml-[17px]">
          <path d="M4 11.500Q.5 11.500.5 8T4 4.500Q5.500.5 9 .5q4 0 4.500 4.500 3 .5 3 3.500t-3 3z" fill="#c9c9c9" stroke="#555" />
          <path d="M5 10L12 4" stroke="#eee" strokeWidth="2" />
        </svg>
        <svg width="16" height="12" viewBox="0 0 16 12" className="ml-[15px]" fill="none" stroke="#1f1f1f">
          <path d="M.5 4q7.500-7 15 0M3 6.500q5-4.500 10 0M5.500 9q2.500-2 5 0" />
          <circle cx="8" cy="10.500" r="1" fill="#1f1f1f" />
        </svg>
        <svg width="16" height="13" viewBox="0 0 16 13" className="ml-2" fill="none" stroke="#1f1f1f">
          <path d="M.5 4.500h2.500l4-3.500v11L3 8.500H.5zM9 4.500q1.500 2 0 4M11 2.500q3 4 0 8" />
          <path d="M13 1q4 5.500 0 11" stroke="#b5b5b5" />
        </svg>
        <svg width="20" height="15" viewBox="0 0 20 15" className="ml-2">
          <rect x=".5" y="3.500" width="17" height="10" rx="2.500" fill="#fff" stroke="#1f1f1f" />
          <path d="M2 5h14v7H2z" fill="#138a13" />
          <path d="M19 6v5" stroke="#1f1f1f" strokeWidth="1.500" />
          <path d="M10 0L5.500 7H8L7 11l5.500-6H10z" fill="#1f1f1f" stroke="#fff" strokeWidth=".6" />
        </svg>
        <div className="ml-3 w-[62px] text-right leading-4">
          <div>11:34</div>
          <div>16.02.2026</div>
        </div>
        <svg width="14" height="16" viewBox="0 0 14 16" fill="#30405a" className="ml-2">
          <path d="M7 0Q2 0 2 6v4L0 12v1h14v-1l-2-2V6q0-6-5-6zM5 14h4q-.5 2-2 2t-2-2z" />
        </svg>
      </div>
    </footer>
  );
}

export default function App() {
  return (
    <div className="flex h-screen flex-col bg-[#ebecf0] font-['DejaVu_Sans_Condensed','Noto_Sans',sans-serif] text-[11px] text-[#23233a]">
      <TitleBar />
      <Ribbon />
      <DocumentTabs />
      <div className="mb-[5px] flex min-h-0 flex-1 pr-[5px] pl-px">
        <Outbox />
        <PreviewPanel />
      </div>
      <StatusBar />
      <Taskbar />
    </div>
  );
}
